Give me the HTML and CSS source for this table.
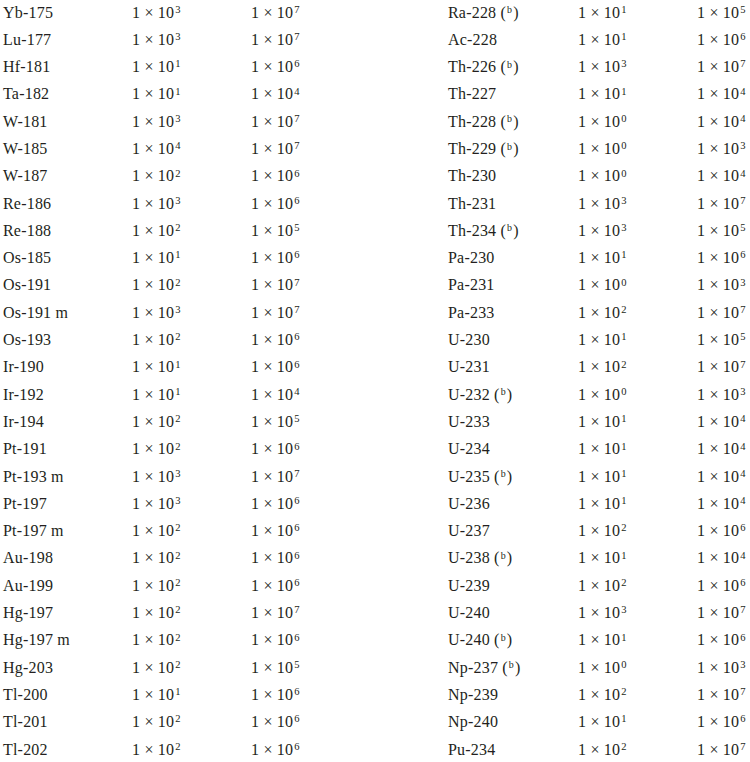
FILE: index.html
```html
<!DOCTYPE html>
<html lang="en">
<head>
    <meta charset="UTF-8">
    <title>Exemption values</title>
    <link rel="stylesheet" href="styles.css">
</head>
<body>
    <div class="sheet">
        <!-- Left half -->
        <div class="half left">
            <span>Yb-175</span><span>1 × 10<sup>3</sup></span><span>1 × 10<sup>7</sup></span>
            <span>Lu-177</span><span>1 × 10<sup>3</sup></span><span>1 × 10<sup>7</sup></span>
            <span>Hf-181</span><span>1 × 10<sup>1</sup></span><span>1 × 10<sup>6</sup></span>
            <span>Ta-182</span><span>1 × 10<sup>1</sup></span><span>1 × 10<sup>4</sup></span>
            <span>W-181</span><span>1 × 10<sup>3</sup></span><span>1 × 10<sup>7</sup></span>
            <span>W-185</span><span>1 × 10<sup>4</sup></span><span>1 × 10<sup>7</sup></span>
            <span>W-187</span><span>1 × 10<sup>2</sup></span><span>1 × 10<sup>6</sup></span>
            <span>Re-186</span><span>1 × 10<sup>3</sup></span><span>1 × 10<sup>6</sup></span>
            <span>Re-188</span><span>1 × 10<sup>2</sup></span><span>1 × 10<sup>5</sup></span>
            <span>Os-185</span><span>1 × 10<sup>1</sup></span><span>1 × 10<sup>6</sup></span>
            <span>Os-191</span><span>1 × 10<sup>2</sup></span><span>1 × 10<sup>7</sup></span>
            <span>Os-191 m</span><span>1 × 10<sup>3</sup></span><span>1 × 10<sup>7</sup></span>
            <span>Os-193</span><span>1 × 10<sup>2</sup></span><span>1 × 10<sup>6</sup></span>
            <span>Ir-190</span><span>1 × 10<sup>1</sup></span><span>1 × 10<sup>6</sup></span>
            <span>Ir-192</span><span>1 × 10<sup>1</sup></span><span>1 × 10<sup>4</sup></span>
            <span>Ir-194</span><span>1 × 10<sup>2</sup></span><span>1 × 10<sup>5</sup></span>
            <span>Pt-191</span><span>1 × 10<sup>2</sup></span><span>1 × 10<sup>6</sup></span>
            <span>Pt-193 m</span><span>1 × 10<sup>3</sup></span><span>1 × 10<sup>7</sup></span>
            <span>Pt-197</span><span>1 × 10<sup>3</sup></span><span>1 × 10<sup>6</sup></span>
            <span>Pt-197 m</span><span>1 × 10<sup>2</sup></span><span>1 × 10<sup>6</sup></span>
            <span>Au-198</span><span>1 × 10<sup>2</sup></span><span>1 × 10<sup>6</sup></span>
            <span>Au-199</span><span>1 × 10<sup>2</sup></span><span>1 × 10<sup>6</sup></span>
            <span>Hg-197</span><span>1 × 10<sup>2</sup></span><span>1 × 10<sup>7</sup></span>
            <span>Hg-197 m</span><span>1 × 10<sup>2</sup></span><span>1 × 10<sup>6</sup></span>
            <span>Hg-203</span><span>1 × 10<sup>2</sup></span><span>1 × 10<sup>5</sup></span>
            <span>Tl-200</span><span>1 × 10<sup>1</sup></span><span>1 × 10<sup>6</sup></span>
            <span>Tl-201</span><span>1 × 10<sup>2</sup></span><span>1 × 10<sup>6</sup></span>
            <span>Tl-202</span><span>1 × 10<sup>2</sup></span><span>1 × 10<sup>6</sup></span>
        </div>

        <!-- Right half -->
        <div class="half right">
            <span>Ra-228 (<sup class="note">b</sup>)</span><span>1 × 10<sup>1</sup></span><span>1 × 10<sup>5</sup></span>
            <span>Ac-228</span><span>1 × 10<sup>1</sup></span><span>1 × 10<sup>6</sup></span>
            <span>Th-226 (<sup class="note">b</sup>)</span><span>1 × 10<sup>3</sup></span><span>1 × 10<sup>7</sup></span>
            <span>Th-227</span><span>1 × 10<sup>1</sup></span><span>1 × 10<sup>4</sup></span>
            <span>Th-228 (<sup class="note">b</sup>)</span><span>1 × 10<sup>0</sup></span><span>1 × 10<sup>4</sup></span>
            <span>Th-229 (<sup class="note">b</sup>)</span><span>1 × 10<sup>0</sup></span><span>1 × 10<sup>3</sup></span>
            <span>Th-230</span><span>1 × 10<sup>0</sup></span><span>1 × 10<sup>4</sup></span>
            <span>Th-231</span><span>1 × 10<sup>3</sup></span><span>1 × 10<sup>7</sup></span>
            <span>Th-234 (<sup class="note">b</sup>)</span><span>1 × 10<sup>3</sup></span><span>1 × 10<sup>5</sup></span>
            <span>Pa-230</span><span>1 × 10<sup>1</sup></span><span>1 × 10<sup>6</sup></span>
            <span>Pa-231</span><span>1 × 10<sup>0</sup></span><span>1 × 10<sup>3</sup></span>
            <span>Pa-233</span><span>1 × 10<sup>2</sup></span><span>1 × 10<sup>7</sup></span>
            <span>U-230</span><span>1 × 10<sup>1</sup></span><span>1 × 10<sup>5</sup></span>
            <span>U-231</span><span>1 × 10<sup>2</sup></span><span>1 × 10<sup>7</sup></span>
            <span>U-232 (<sup class="note">b</sup>)</span><span>1 × 10<sup>0</sup></span><span>1 × 10<sup>3</sup></span>
            <span>U-233</span><span>1 × 10<sup>1</sup></span><span>1 × 10<sup>4</sup></span>
            <span>U-234</span><span>1 × 10<sup>1</sup></span><span>1 × 10<sup>4</sup></span>
            <span>U-235 (<sup class="note">b</sup>)</span><span>1 × 10<sup>1</sup></span><span>1 × 10<sup>4</sup></span>
            <span>U-236</span><span>1 × 10<sup>1</sup></span><span>1 × 10<sup>4</sup></span>
            <span>U-237</span><span>1 × 10<sup>2</sup></span><span>1 × 10<sup>6</sup></span>
            <span>U-238 (<sup class="note">b</sup>)</span><span>1 × 10<sup>1</sup></span><span>1 × 10<sup>4</sup></span>
            <span>U-239</span><span>1 × 10<sup>2</sup></span><span>1 × 10<sup>6</sup></span>
            <span>U-240</span><span>1 × 10<sup>3</sup></span><span>1 × 10<sup>7</sup></span>
            <span>U-240 (<sup class="note">b</sup>)</span><span>1 × 10<sup>1</sup></span><span>1 × 10<sup>6</sup></span>
            <span>Np-237 (<sup class="note">b</sup>)</span><span>1 × 10<sup>0</sup></span><span>1 × 10<sup>3</sup></span>
            <span>Np-239</span><span>1 × 10<sup>2</sup></span><span>1 × 10<sup>7</sup></span>
            <span>Np-240</span><span>1 × 10<sup>1</sup></span><span>1 × 10<sup>6</sup></span>
            <span>Pu-234</span><span>1 × 10<sup>2</sup></span><span>1 × 10<sup>7</sup></span>
        </div>
    </div>
</body>
</html>
```

FILE: styles.css
```css
* {
    margin: 0;
    padding: 0;
    box-sizing: border-box;
}

body {
    font-family: "Liberation Serif", "DejaVu Serif", serif;
    font-size: 16px;
    letter-spacing: 0.2px;
    color: #231f20;
    background-color: #fff;
}

.sheet {
    display: flex;
    padding-left: 3px;
    margin-top: -1.5px;
}

/* each half is a 3 column grid: nuclide, concentration, activity */
.half {
    display: grid;
    grid-auto-rows: 27.3px;
    line-height: 27.3px;
    white-space: nowrap;
}

.left {
    width: 445px;
    grid-template-columns: 129px 119px 1fr;
}

.right {
    width: 302px;
    grid-template-columns: 130px 119px 1fr;
}

sup {
    font-size: 0.66em;
    line-height: 0;
    vertical-align: 0.45em;
    margin-left: 1px;
}

sup.note {
    font-size: 0.62em;
    margin: 0 1px;
}
```
